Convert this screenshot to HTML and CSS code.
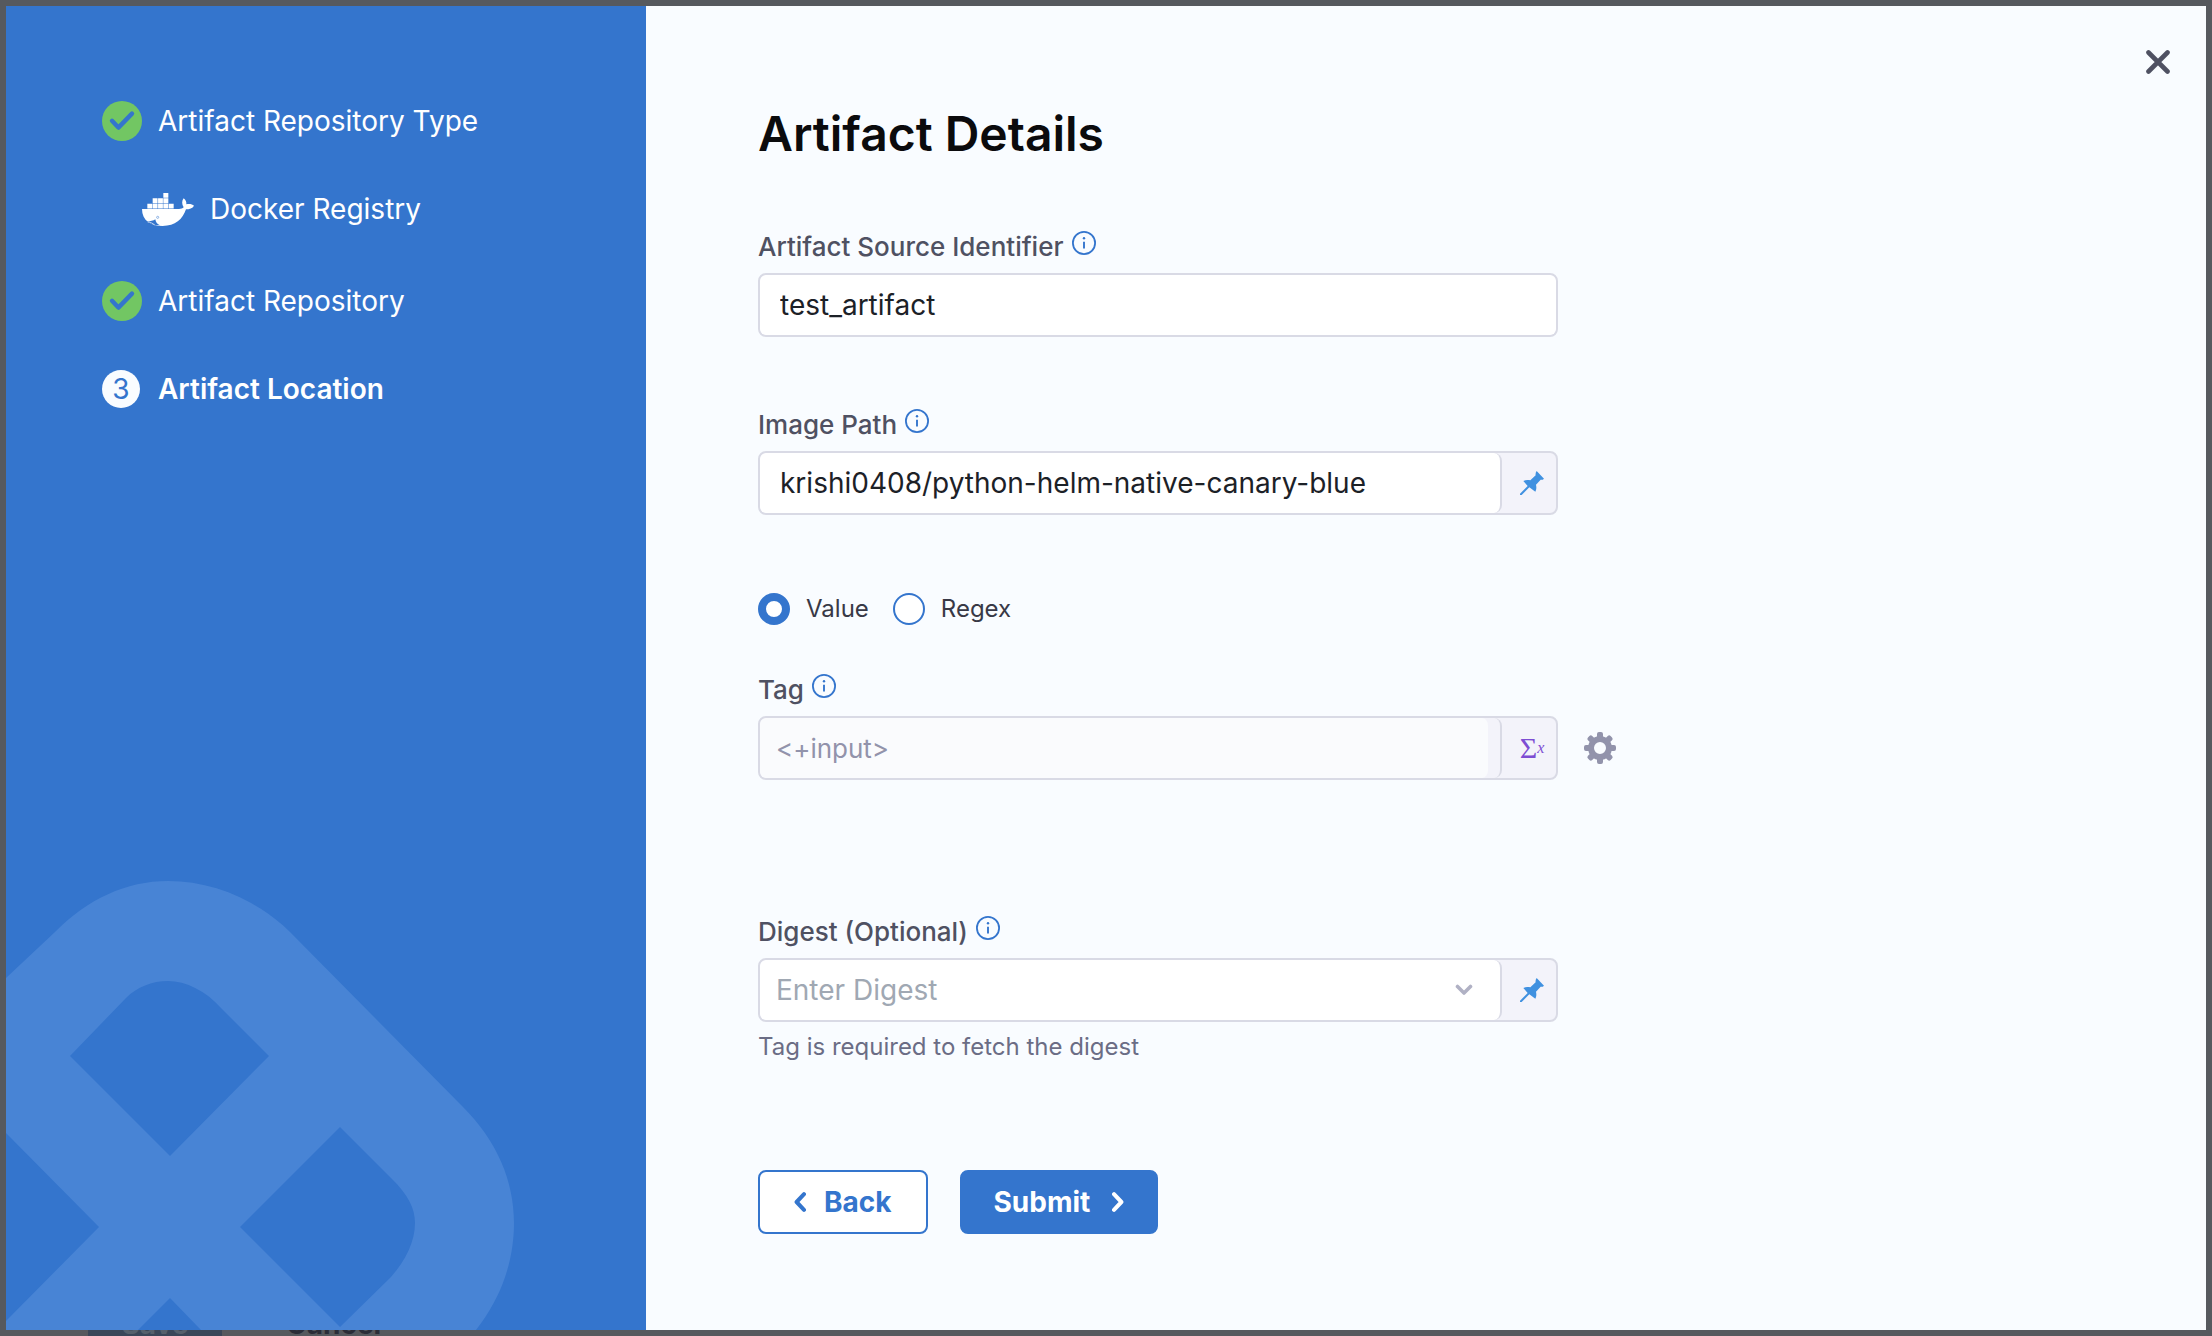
FILE: index.html
```html
<!DOCTYPE html>
<html lang="en">
<head>
<meta charset="utf-8">
<meta name="viewport" content="width=device-width, initial-scale=1">
<title>Artifact Details</title>
<link rel="stylesheet" href="styles.css">
</head>
<body>
<svg class="sprite" aria-hidden="true">
  <symbol id="check" viewBox="0 0 40 40">
    <circle cx="20" cy="20" r="20" fill="#72c663"/>
    <path d="M10 19.8l6.4 6.8L30 12.6" fill="none" stroke="#3475cd" stroke-width="4.4" stroke-linecap="round" stroke-linejoin="round"/>
  </symbol>
  <symbol id="info" viewBox="0 0 24 24">
    <circle cx="12" cy="12" r="11.1" fill="none" stroke="currentColor" stroke-width="1.8"/>
    <circle cx="12" cy="7.2" r="1.2" fill="currentColor"/>
    <path d="M12 10.8V17.6" stroke="currentColor" stroke-width="1.9"/>
  </symbol>
  <symbol id="pin" viewBox="120 92 72 72">
    <path fill="currentColor" d="M170 92L192 115C188 119 185 119 182 118L168 133C170 141 169 149 166 154L148 141L125 164H120V160L143 137L130 122C137 118 144 118 151 120L167 105C166 101 167 96 170 92Z"/>
  </symbol>
</svg>

<div class="page">
  <footer class="page-footer">
    <button class="page-save" type="button">Save</button>
    <button class="page-cancel" type="button">Cancel</button>
  </footer>
</div>

<div class="modal" role="dialog" aria-labelledby="title">
  <aside class="sidebar">
    <ol class="steps">
      <li class="step"><svg class="step-icon"><use href="#check"/></svg>Artifact Repository Type</li>
      <li class="step step-sub">
        <svg class="docker" viewBox="36 33 156 99" aria-hidden="true">
          <g fill="#fff">
            <path d="M100 33h15v14.5h-15zM68 49h14.7v14.5H68zM84.200 49h14.500v14.500H84.200zM100 49h15v14.500h-15zM52 65h14.700v14.500H52zM68 65h14.700v14.500H68zM84.200 65h14.500v14.500H84.200zM100 65h15v14.500h-15zM116.500 65h14.500v14.500h-14.500z"/>
            <path d="M36 81H147C153 81 158 79 161 76C155 68 155 56 161 49C167 53 170 60 169 67C177 65 187 66 192 71C188 79 178 82 168 82C158 112 136 132 98 132C62 132 36 116 36 81Z"/>
          </g>
          <path d="M47 118C57 119 69 117 76 112C77 120 82 127 90 130C72 130 58 126 47 118Z" fill="#3475cd"/>
          <path d="M53 120C62 121 67 123 74 129" fill="none" stroke="#fff" stroke-width="2"/>
          <circle cx="83" cy="106" r="3.200" fill="#fff" stroke="#3475cd" stroke-width="1.500"/>
        </svg>
        Docker Registry
      </li>
      <li class="step"><svg class="step-icon"><use href="#check"/></svg>Artifact Repository</li>
      <li class="step step-current" aria-current="step"><span class="step-number">3</span>Artifact Location</li>
    </ol>
    <svg class="emblem" viewBox="0 0 640 460" aria-hidden="true">
      <path fill="#4884d5" fill-rule="evenodd" d="M0 108L49 62C82 29 120 11 162 11C206 11 250 29 284 62L457 237C491 271 508 311 508 353C508 390 496 427 470 460H195L164 428L132 460H0V451L93 357L0 263Z
        M64 186L164 286L263 186L215 138C200 121 180 111 162 111C146 111 131 117 120 128Z
        M234 357L334 257L386 309C402 325 409 338 409 353C409 371 400 390 385 407L334 457Z"/>
    </svg>
  </aside>

  <main class="content">
    <button class="close" type="button" aria-label="Close">
      <svg viewBox="0 0 24 24"><path d="M2.500 2.500l19 19M21.500 2.500l-19 19" stroke="#4f5162" stroke-width="4.600" stroke-linecap="round"/></svg>
    </button>
    <form class="form">
      <h1 id="title">Artifact Details</h1>

      <div class="field">
        <div class="label-row"><label for="identifier">Artifact Source Identifier</label><svg class="info"><use href="#info"/></svg></div>
        <div class="control"><input id="identifier" type="text" value="test_artifact"></div>
      </div>

      <div class="field field-image">
        <div class="label-row"><label for="image">Image Path</label><svg class="info"><use href="#info"/></svg></div>
        <div class="control">
          <input id="image" type="text" value="krishi0408/python-helm-native-canary-blue">
          <button class="addon" type="button" aria-label="Fixed value"><svg class="pin"><use href="#pin"/></svg></button>
        </div>
      </div>

      <div class="radios">
        <label class="radio"><input type="radio" name="kind" checked>Value</label>
        <label class="radio"><input type="radio" name="kind">Regex</label>
      </div>

      <div class="field field-tag">
        <div class="label-row"><label for="tag">Tag</label><svg class="info"><use href="#info"/></svg></div>
        <div class="control-row">
          <div class="control control-runtime">
            <input id="tag" type="text" value="&lt;+input&gt;" readonly>
            <button class="addon" type="button" aria-label="Runtime input"><span class="sigma">Σ</span><span class="sigma-x">x</span></button>
          </div>
          <button class="gear" type="button" aria-label="Configure">
            <svg viewBox="0 0 32 32" fill="none" stroke="#9293ab">
              <circle cx="16" cy="16" r="9" stroke-width="6"/>
              <path stroke-width="4" stroke-linejoin="round" fill="#9293ab" d="M15 2h2v4h-2zM15 26h2v4h-2zM2 15h4v2H2zM26 15h4v2h-4z"/>
              <path stroke-width="4" stroke-linejoin="round" fill="#9293ab" transform="rotate(45 16 16)" d="M15 2h2v4h-2zM15 26h2v4h-2zM2 15h4v2H2zM26 15h4v2h-4z"/>
            </svg>
          </button>
        </div>
      </div>

      <div class="field field-digest">
        <div class="label-row"><label for="digest">Digest (Optional)</label><svg class="info"><use href="#info"/></svg></div>
        <div class="control">
          <div class="select">
            <select id="digest"><option>Enter Digest</option></select>
            <svg class="caret" viewBox="0 0 18 12"><path d="M2.500 2.500L9 9l6.500-6.500" fill="none" stroke="#b0b1c4" stroke-width="3.600" stroke-linecap="round" stroke-linejoin="round"/></svg>
          </div>
          <button class="addon" type="button" aria-label="Fixed value"><svg class="pin"><use href="#pin"/></svg></button>
        </div>
        <p class="hint">Tag is required to fetch the digest</p>
      </div>

      <div class="actions">
        <button class="btn btn-back" type="button">
          <svg viewBox="0 0 12 20"><path d="M10 2.200L2.600 10L10 17.800" fill="none" stroke="currentColor" stroke-width="4" stroke-linecap="round" stroke-linejoin="round"/></svg>Back
        </button>
        <button class="btn btn-submit" type="submit">Submit
          <svg viewBox="0 0 12 20"><path d="M2 2.200L9.400 10L2 17.800" fill="none" stroke="currentColor" stroke-width="4" stroke-linecap="round" stroke-linejoin="round"/></svg>
        </button>
      </div>
    </form>
  </main>
</div>
</body>
</html>
```
FILE: styles.css
```css
* {
  box-sizing: border-box;
}

body {
  margin: 0;
  background: #56595e;
  font-family: Inter, "Liberation Sans", sans-serif;
  font-size: 28px;
  color: #22222a;
}

button,
input,
select {
  margin: 0;
  padding: 0;
  border: 0;
  background: none;
  font: inherit;
  color: inherit;
}

svg {
  display: block;
  flex: none;
}

.sprite {
  position: absolute;
  width: 0;
  height: 0;
}

/* Page behind the dialog */
.page {
  display: flex;
  flex-direction: column;
  justify-content: flex-end;
  height: 100vh;
  overflow: hidden;
}

.page-footer {
  display: flex;
  gap: 32px;
  height: 44px;
  padding-left: 88px;
}

.page-save,
.page-cancel {
  height: 64px;
  font-weight: 700;
}

.page-save {
  width: 134px;
  border-radius: 8px;
  background: #3a4759;
  color: #55606c;
}

.page-cancel {
  padding: 0 32px;
  color: #2b2d38;
}

/* Dialog */
.modal {
  position: fixed;
  inset: 6px;
  display: flex;
  overflow: auto;
  background: #f9fcff;
}

.sidebar {
  display: flex;
  flex: 0 0 640px;
  flex-direction: column;
  justify-content: space-between;
  min-height: 100%;
  background: #3475cd;
  color: #fff;
}

.steps {
  display: flex;
  flex-direction: column;
  gap: 48px;
  margin: 0;
  padding: 95px 24px 32px 96px;
  list-style: none;
}

.step {
  display: flex;
  align-items: center;
  gap: 16px;
  line-height: 40px;
}

.step-sub {
  margin-bottom: 4px;
  padding-left: 40px;
}

.step-icon {
  width: 40px;
  height: 40px;
}

.docker {
  width: 52px;
  height: 33px;
}

.step-current {
  font-weight: 600;
}

.step-number {
  width: 38px;
  margin-right: 2px;
  border-radius: 50%;
  background: #f9fcff;
  color: #3475cd;
  font-size: 28px;
  font-weight: 400;
  line-height: 38px;
  text-align: center;
}

.emblem {
  width: 100%;
}

.content {
  display: flex;
  flex: 1;
  flex-direction: row-reverse;
  align-items: flex-start;
  justify-content: space-between;
  padding: 44px 36px 48px 112px;
}

.close svg {
  width: 24px;
  height: 24px;
}

.form {
  display: flex;
  flex: 0 1 864px;
  flex-direction: column;
  padding-top: 56px;
}

h1 {
  margin: 0 0 65px;
  font-size: 48px;
  font-weight: 600;
  line-height: 56px;
  color: #0b0b0d;
}

.label-row {
  display: flex;
  align-items: flex-start;
  gap: 8px;
  height: 46px;
  font-size: 26px;
  font-weight: 500;
  line-height: 40px;
  color: #4f5162;
}

.info {
  width: 24px;
  height: 24px;
  margin-top: 4px;
  color: #3475cd;
}

.control {
  display: flex;
  width: 100%;
  max-width: 800px;
  height: 64px;
  overflow: hidden;
  border: 2px solid #d9dae5;
  border-radius: 8px;
  background: #f3f3fa;
}

.control input {
  flex: 1;
  min-width: 0;
  padding: 0 20px;
  border-radius: 6px;
  background: #fff;
  color: #1c2127;
}

.addon {
  display: flex;
  flex: 0 0 54px;
  align-items: center;
  justify-content: center;
  padding-left: 6px;
}

.control input:not(:last-child),
.select {
  border-right: 2px solid #d9dae5;
  border-radius: 6px 8px 8px 6px;
}

.pin {
  width: 24px;
  height: 24px;
  color: #4091e0;
}

.field-image {
  margin-top: 68px;
}

.radios {
  display: flex;
  gap: 24px;
  margin-top: 78px;
}

.radio {
  display: flex;
  align-items: center;
  gap: 16px;
  font-size: 24px;
  line-height: 32px;
  color: #383946;
}

.radio input {
  width: 32px;
  height: 32px;
  border: 2px solid #3475cd;
  border-radius: 50%;
  background: #fff;
  appearance: none;
}

.radio input:checked {
  border-width: 8px;
}

.field-tag {
  margin-top: 45px;
}

.control-row {
  display: flex;
  align-items: center;
  gap: 26px;
}

.control-runtime input {
  padding: 0 16px;
  background: #fafbfd;
  box-shadow: inset -12px 0 #f3f3fa;
  font-size: 26px;
  color: #9293ab;
}

.sigma {
  font-family: "Liberation Serif", serif;
  font-size: 30px;
  color: #7d4dd3;
}

.sigma-x {
  font-family: "Liberation Serif", serif;
  font-size: 16px;
  font-style: italic;
  color: #7d4dd3;
}

.gear svg {
  width: 32px;
  height: 32px;
}

.field-digest {
  margin-top: 132px;
}

.select {
  display: grid;
  flex: 1;
  align-items: center;
  background: #fff;
}

.select select,
.caret {
  grid-area: 1 / 1;
}

.select select {
  height: 100%;
  padding: 0 48px 0 16px;
  appearance: none;
  color: #a0a8b3;
}

.caret {
  justify-self: end;
  width: 18px;
  height: 12px;
  margin-right: 27px;
  pointer-events: none;
}

.hint {
  margin: 9px 0 0;
  font-size: 24px;
  line-height: 32px;
  color: #6b6d85;
}

.actions {
  display: flex;
  gap: 32px;
  margin-top: 107px;
}

.btn {
  display: flex;
  align-items: center;
  gap: 20px;
  height: 64px;
  border: 2px solid #3475cd;
  border-radius: 8px;
  font-weight: 700;
}

.btn svg {
  width: 12px;
  height: 20px;
}

.btn-back {
  gap: 18px;
  padding: 0 34px;
  background: #fff;
  color: #3475cd;
}

.btn-submit {
  gap: 22px;
  padding: 0 32px;
  background: #3475cd;
  color: #fff;
}
```
